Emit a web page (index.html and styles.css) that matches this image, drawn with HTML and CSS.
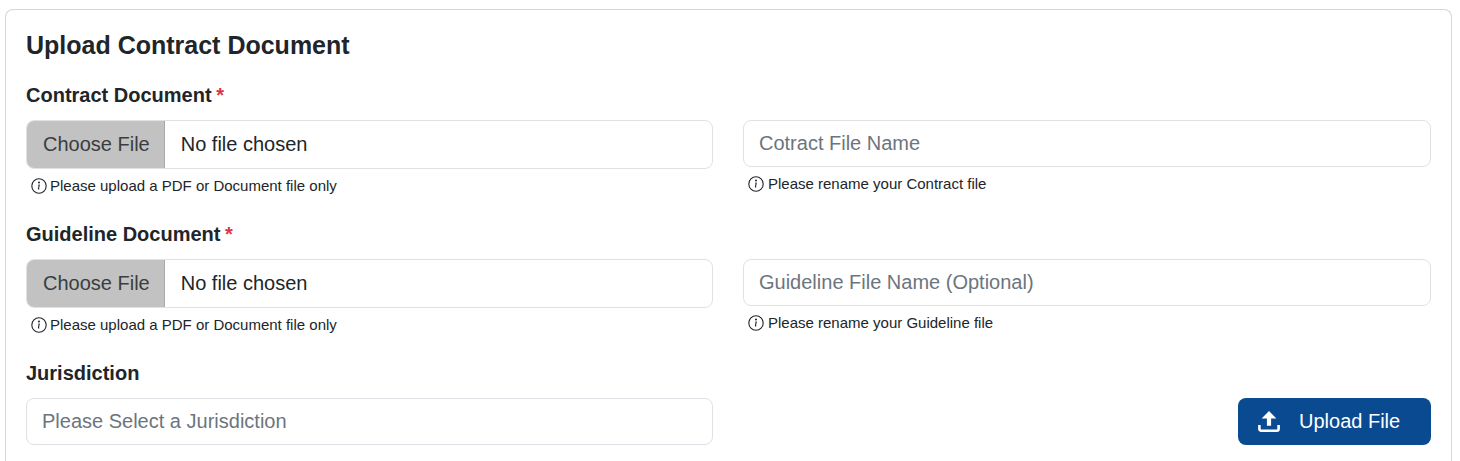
FILE: index.html
```html
<!DOCTYPE html>
<html lang="en">
<head>
<meta charset="utf-8">
<title>Upload Contract Document</title>
<link rel="stylesheet" href="styles.css">
</head>
<body>
<main class="card">
  <h1 class="title">Upload Contract Document</h1>
  <section class="row">
    <div class="col">
      <div class="label">Contract Document <span class="req">*</span></div>
      <div class="file"><span class="file-btn">Choose File</span><span class="file-name">No file chosen</span></div>
      <div class="help"><svg class="info" viewBox="0 0 16 16"><circle cx="8" cy="8" r="7.2" fill="none" stroke="currentColor" stroke-width="1.1"/><path d="M8.9 6.6 7 6.85l-.07.33.37.07c.24.06.29.14.24.38l-.6 2.85c-.16.74.09 1.09.67 1.09.45 0 .97-.21 1.21-.49l.07-.34c-.17.15-.42.21-.58.21-.23 0-.31-.16-.25-.44L8.9 6.6zM8 5.4a1 1 0 1 0 0-2 1 1 0 0 0 0 2z" fill="currentColor"/></svg><span>Please upload a PDF or Document file only</span></div>
    </div>
    <div class="col col-right">
      <div class="input placeholder">Cotract File Name</div>
      <div class="help help-name"><svg class="info" viewBox="0 0 16 16"><circle cx="8" cy="8" r="7.2" fill="none" stroke="currentColor" stroke-width="1.1"/><path d="M8.9 6.6 7 6.85l-.07.33.37.07c.24.06.29.14.24.38l-.6 2.85c-.16.74.09 1.09.67 1.09.45 0 .97-.21 1.21-.49l.07-.34c-.17.15-.42.21-.58.21-.23 0-.31-.16-.25-.44L8.9 6.6zM8 5.4a1 1 0 1 0 0-2 1 1 0 0 0 0 2z" fill="currentColor"/></svg><span>Please rename your Contract file</span></div>
    </div>
  </section>
  <section class="row">
    <div class="col">
      <div class="label">Guideline Document <span class="req">*</span></div>
      <div class="file"><span class="file-btn">Choose File</span><span class="file-name">No file chosen</span></div>
      <div class="help"><svg class="info" viewBox="0 0 16 16"><circle cx="8" cy="8" r="7.2" fill="none" stroke="currentColor" stroke-width="1.1"/><path d="M8.9 6.6 7 6.85l-.07.33.37.07c.24.06.29.14.24.38l-.6 2.85c-.16.74.09 1.09.67 1.09.45 0 .97-.21 1.21-.49l.07-.34c-.17.15-.42.21-.58.21-.23 0-.31-.16-.25-.44L8.9 6.6zM8 5.4a1 1 0 1 0 0-2 1 1 0 0 0 0 2z" fill="currentColor"/></svg><span>Please upload a PDF or Document file only</span></div>
    </div>
    <div class="col col-right">
      <div class="input placeholder">Guideline File Name (Optional)</div>
      <div class="help help-name"><svg class="info" viewBox="0 0 16 16"><circle cx="8" cy="8" r="7.2" fill="none" stroke="currentColor" stroke-width="1.1"/><path d="M8.9 6.6 7 6.85l-.07.33.37.07c.24.06.29.14.24.38l-.6 2.85c-.16.74.09 1.09.67 1.09.45 0 .97-.21 1.21-.49l.07-.34c-.17.15-.42.21-.58.21-.23 0-.31-.16-.25-.44L8.9 6.6zM8 5.4a1 1 0 1 0 0-2 1 1 0 0 0 0 2z" fill="currentColor"/></svg><span>Please rename your Guideline file</span></div>
    </div>
  </section>
  <section class="row">
    <div class="col">
      <div class="label">Jurisdiction</div>
      <div class="input placeholder">Please Select a Jurisdiction</div>
    </div>
    <div class="col col-right col-action">
      <div class="upload"><svg class="upload-icon" viewBox="0 0 22 21"><path d="M11 0 3.6 7.6h5.3v7.2h4.2V7.6h5.3z" fill="currentColor"/><path d="M1.4 14v4a1.7 1.7 0 0 0 1.7 1.7h15.8a1.7 1.7 0 0 0 1.7-1.7v-4" fill="none" stroke="currentColor" stroke-width="2.6"/></svg><span>Upload File</span></div>
    </div>
  </section>
</main>
</body>
</html>
```
FILE: styles.css
```css
* { box-sizing: border-box; }
html, body { margin: 0; height: 461px; overflow: hidden; background: #fff; }
body {
  padding: 9px 8px 0 5px;
  font-family: "Liberation Sans", Arial, sans-serif;
  color: #212529;
}
.card {
  border: 1px solid #d6d6d6;
  border-bottom: 0;
  border-radius: 8px 8px 0 0;
  padding: 20px 20px 0;
  height: 452px;
}
.title {
  margin: 0 0 23px;
  font-size: 25px;
  line-height: 30px;
  font-weight: 700;
}
.row {
  display: grid;
  grid-template-columns: 687px 688px;
  column-gap: 30px;
  margin-bottom: 27px;
}
.col { display: flex; flex-direction: column; }
.col-right { padding-top: 37px; }
.col-action { align-items: flex-end; }
.label {
  height: 24px;
  margin-bottom: 13px;
  font-size: 20px;
  line-height: 24px;
  font-weight: 700;
}
.req { margin-left: -1px; color: #dc3545; }
.file {
  display: flex;
  height: 49px;
  border: 1px solid #dee2e6;
  border-radius: 8px;
  overflow: hidden;
  font-size: 20px;
}
.file-btn {
  display: flex;
  align-items: center;
  padding: 0 14px 0 16px;
  background: #c2c2c2;
  border-right: 1px solid #a9a9a9;
  color: #3a3d40;
}
.file-name { display: flex; align-items: center; padding-left: 16px; }
.input {
  display: flex;
  align-items: center;
  height: 47px;
  padding: 0 15px;
  border: 1px solid #dee2e6;
  border-radius: 8px;
  font-size: 20px;
}
.placeholder { color: #6c757d; }
.help {
  display: flex;
  align-items: center;
  gap: 3px;
  height: 18px;
  margin-top: 8px;
  padding-left: 5px;
  font-size: 15px;
  line-height: 18px;
}
.help-name { gap: 4px; }
.info { width: 16px; height: 16px; flex: none; }
.upload {
  display: flex;
  align-items: center;
  gap: 19px;
  width: 193px;
  height: 47px;
  padding-left: 20px;
  background: #0a4a91;
  color: #fff;
  border-radius: 8px;
  font-size: 20px;
}
.upload-icon { width: 22px; height: 21px; flex: none; }
```
